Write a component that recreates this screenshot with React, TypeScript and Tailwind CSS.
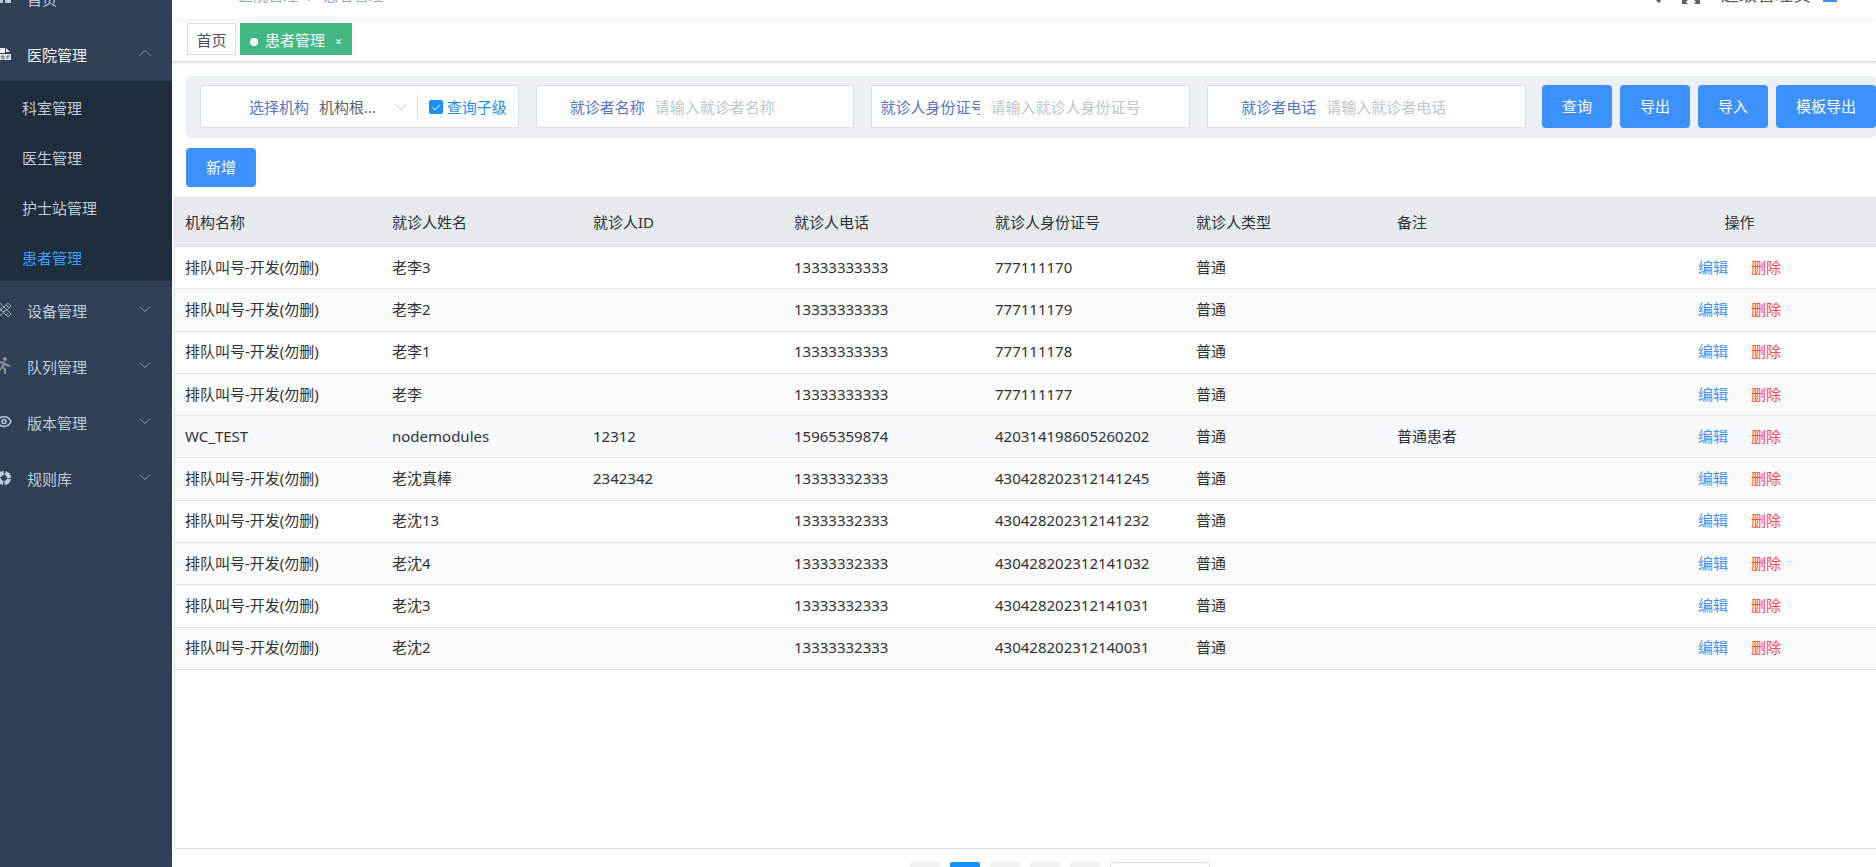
import { useState } from "react";
import type { ReactNode } from "react";

// ── Types ───────────────────────────────────────────────────────────────────

interface MenuItem {
  label: string;
  icon: ReactNode;
  children?: string[];
}

interface Patient {
  org: string;
  name: string;
  pid: string;
  phone: string;
  idCard: string;
  type: string;
  remark: string;
}

// ── Icons ───────────────────────────────────────────────────────────────────

const HomeIcon = (
  <svg viewBox="0 0 20 20" className="h-5 w-5 text-[#bfcbd9]" fill="currentColor">
    <path d="M12 2 4 9v7h7v-3h2v3h6V9z" />
  </svg>
);

const FileIcon = (
  <svg viewBox="0 0 20 20" className="h-5 w-5" fill="none">
    <path d="M5 5h8v5H5zM14 5l4 4h-4z" fill="#f4f4f5" />
    <path d="M3 11h16v6H3z" fill="#e0e4e9" />
    <path d="M6 16v-3h2v1H6m4 2v-3h2v3h-2m5 0v-3h3m-3 1h2" stroke="#6a7686" />
  </svg>
);

const ToolsIcon = (
  <svg viewBox="0 0 20 20" className="h-5 w-5 text-[#9aa5b3]" fill="none" stroke="currentColor">
    <path d="m5 7 3-3 11 11-3 3zM16 4l3 3-10 9-4 2 1-4zM8 10l2-2M11 13l2-2M14 16l2-2M14 6l3 3" />
  </svg>
);

const RunIcon = (
  <svg viewBox="0 0 20 20" className="h-5 w-5 text-[#8c8f94]" fill="none" stroke="currentColor" strokeWidth="2">
    <circle cx="13" cy="4" r="1" fill="currentColor" />
    <path d="m6 10 2-3 4 1 2 2 4 1M12 8l-2 4 3 2v5M9 13l-2 3H4" />
  </svg>
);

const EyeIcon = (
  <svg viewBox="0 0 20 20" className="h-5 w-5 text-[#bfcbd9]" fill="none" stroke="currentColor" strokeWidth="1.5">
    <path d="M5 10.500c3-6.500 11-6.500 14 0-3 6.500-11 6.500-14 0z" />
    <circle cx="12" cy="10.500" r="2" />
  </svg>
);

const RingIcon = (
  <svg viewBox="0 0 20 20" className="h-5 w-5 text-[#bfcbd9]" fill="none" stroke="currentColor" strokeWidth="4">
    <circle cx="12" cy="11" r="5" strokeDasharray="6.4 1.45" strokeDashoffset="-0.7" />
  </svg>
);

function Chevron({ up = false, className = "" }: { up?: boolean; className?: string }) {
  return (
    <svg viewBox="0 0 12 12" className={`h-3 w-3 ${className}`} fill="none" stroke="currentColor">
      <path d={up ? "m.5 8.500 5.500-5 5.500 5" : "m.5 3.500 5.500 5 5.500-5"} />
    </svg>
  );
}

// ── Data ────────────────────────────────────────────────────────────────────

const MENU: MenuItem[] = [
  { label: "首页", icon: HomeIcon },
  {
    label: "医院管理",
    icon: FileIcon,
    children: ["科室管理", "医生管理", "护士站管理", "患者管理"],
  },
  { label: "设备管理", icon: ToolsIcon, children: [] },
  { label: "队列管理", icon: RunIcon, children: [] },
  { label: "版本管理", icon: EyeIcon, children: [] },
  { label: "规则库", icon: RingIcon, children: [] },
];

const ORG = "排队叫号-开发(勿删)";

const PATIENTS: Patient[] = [
  { org: ORG, name: "老李3", pid: "", phone: "13333333333", idCard: "777111170", type: "普通", remark: "" },
  { org: ORG, name: "老李2", pid: "", phone: "13333333333", idCard: "777111179", type: "普通", remark: "" },
  { org: ORG, name: "老李1", pid: "", phone: "13333333333", idCard: "777111178", type: "普通", remark: "" },
  { org: ORG, name: "老李", pid: "", phone: "13333333333", idCard: "777111177", type: "普通", remark: "" },
  { org: "WC_TEST", name: "nodemodules", pid: "12312", phone: "15965359874", idCard: "420314198605260202", type: "普通", remark: "普通患者" },
  { org: ORG, name: "老沈真棒", pid: "2342342", phone: "13333332333", idCard: "430428202312141245", type: "普通", remark: "" },
  { org: ORG, name: "老沈13", pid: "", phone: "13333332333", idCard: "430428202312141232", type: "普通", remark: "" },
  { org: ORG, name: "老沈4", pid: "", phone: "13333332333", idCard: "430428202312141032", type: "普通", remark: "" },
  { org: ORG, name: "老沈3", pid: "", phone: "13333332333", idCard: "430428202312141031", type: "普通", remark: "" },
  { org: ORG, name: "老沈2", pid: "", phone: "13333332333", idCard: "430428202312140031", type: "普通", remark: "" },
];

const COLUMNS = ["机构名称", "就诊人姓名", "就诊人ID", "就诊人电话", "就诊人身份证号", "就诊人类型", "备注"];

const FIELDS = [
  { id: "name", label: "就诊者名称", placeholder: "请输入就诊者名称" },
  { id: "idCard", label: "就诊人身份证号", placeholder: "请输入就诊人身份证号" },
  { id: "phone", label: "就诊者电话", placeholder: "请输入就诊者电话" },
];

// ── Sidebar ─────────────────────────────────────────────────────────────────

function Sidebar({ active }: { active: string }) {
  return (
    <aside className="-ml-7 w-[200px] shrink-0 bg-[#304156] text-[#bfcbd9]">
      {MENU.map((item) => {
        const open = !!item.children?.length;
        return (
          <div key={item.label}>
            <a href="#" className={`flex h-14 items-center px-5 ${open ? "text-[#f4f4f5]" : ""}`}>
              {item.icon}
              <span className="ml-[15px] flex-1 pt-1">{item.label}</span>
              {item.children && <Chevron up={open} className="mr-px text-[#909399]" />}
            </a>
            {open && (
              <div className="bg-[#1f2d3d]">
                {item.children?.map((child) => (
                  <a
                    key={child}
                    href="#"
                    className={`flex h-[50px] items-center pl-[50px] pt-1 ${child === active ? "text-[#409eff]" : ""}`}
                  >
                    {child}
                  </a>
                ))}
              </div>
            )}
          </div>
        );
      })}
    </aside>
  );
}

// ── Top bar and tags ────────────────────────────────────────────────────────

function TopBar() {
  return (
    <header className="flex h-[50px] shrink-0 items-center pl-[66px] pr-[39px] shadow-[0_1px_4px_rgba(0,21,41,0.08)]">
      <nav className="flex flex-1 pt-0.5 text-[#97a8be]" aria-label="面包屑">
        <a href="#">医院管理</a>
        <span className="mx-[10px]">/</span>
        <span>患者管理</span>
      </nav>
      <button type="button" aria-label="搜索" className="mr-5 text-[#5a5e66]">
        <svg viewBox="0 0 20 20" className="h-5 w-5" fill="none" stroke="currentColor" strokeWidth="2">
          <circle cx="9" cy="8" r="6" />
          <path d="m13 12 6 6" strokeWidth="3" />
        </svg>
      </button>
      <button type="button" aria-label="全屏" className="mr-5 text-[#5a5e66]">
        <svg viewBox="0 0 20 20" className="h-5 w-5" fill="currentColor">
          <path d="M1 1h6L5 3l3 3-2 2-3-3-2 2zM19 1v6l-2-2-3 3-2-2 3-3-2-2zM1 20v-6l2 2 3-3 2 2-3 3 2 2zM19 20h-6l2-2-3-3 2-2 3 3 2-2z" />
        </svg>
      </button>
      <span className="text-lg leading-5 text-[#5a5e66]">超级管理员</span>
      <span className="ml-3 h-4 w-[14px] bg-[#3d91ff]" />
    </header>
  );
}

function TagsBar() {
  return (
    <div className="flex h-[43px] shrink-0 items-start gap-1 border-b border-[#d8dce5] pl-[15px] pt-1 shadow-[0_1px_3px_rgba(0,0,0,0.12)]">
      <a href="#" className="flex h-8 w-[49px] items-center justify-center border border-[#d8dce5] pt-0.5 text-[#495060]">
        首页
      </a>
      <a href="#" className="flex h-8 items-center bg-[#42b983] px-[10px] pt-0.5 text-white">
        <span className="mr-[7px] mt-1 h-2 w-2 rounded-full bg-white" />
        患者管理
        <span className="ml-[10px] mt-1 text-xs leading-none">×</span>
      </a>
    </div>
  );
}

// ── Filters ─────────────────────────────────────────────────────────────────

function PrimaryButton({ children, className = "" }: { children: ReactNode; className?: string }) {
  return (
    <button type="button" className={`shrink-0 rounded bg-[#3d91ff] px-5 pb-0.5 text-white ${className}`}>
      {children}
    </button>
  );
}

function FilterBar() {
  const [withChildren, setWithChildren] = useState(true);
  return (
    <form className="ml-[14px] mt-[14px] flex h-[62px] shrink-0 items-start rounded-md bg-[#edf1f6] pl-[14px] pt-[9px]">
      <div className="mr-4 grid flex-1 grid-cols-4 gap-[17px]">
        <div className="flex h-[43px] items-center border border-[#dcdfe6] bg-white">
          <label htmlFor="org" className="w-[108px] shrink-0 text-right text-[#5473c9]">
            选择机构
          </label>
          <div className="relative ml-[10px] flex min-w-0 flex-1 items-center">
            <select id="org" className="w-full appearance-none bg-transparent text-[#606266] outline-none">
              <option>机构根...</option>
            </select>
            <Chevron className="pointer-events-none absolute right-[10px] text-[#c0c4cc]" />
          </div>
          <label className="flex h-6 shrink-0 items-center border-l border-[#dcdfe6] px-[11px] text-[#1890ff]">
            <span className="relative mr-1 flex h-[14px] w-[14px]">
              <input
                type="checkbox"
                checked={withChildren}
                onChange={(e) => setWithChildren(e.target.checked)}
                className="h-[14px] w-[14px] appearance-none rounded-xs border border-[#1890ff] checked:bg-[#1890ff]"
              />
              {withChildren && (
                <svg viewBox="0 0 14 14" className="pointer-events-none absolute inset-0" fill="none" stroke="#fff">
                  <path d="m3.500 7.500 2.500 2.500 5-5.500" />
                </svg>
              )}
            </span>
            查询子级
          </label>
        </div>
        {FIELDS.map((f) => (
          <div key={f.id} className="flex h-[43px] items-center border border-[#dcdfe6] bg-white pl-2">
            <div className="flex w-[100px] shrink-0 justify-end">
              <label htmlFor={f.id} className="min-w-0 overflow-hidden whitespace-nowrap text-[#5473c9]">
                {f.label}
              </label>
            </div>
            <input
              id={f.id}
              placeholder={f.placeholder}
              className="ml-[10px] min-w-0 flex-1 text-[#606266] outline-none placeholder:text-[#c0c4cc]"
            />
          </div>
        ))}
      </div>
      <div className="flex gap-2">
        <PrimaryButton className="h-[43px]">查询</PrimaryButton>
        <PrimaryButton className="h-[43px]">导出</PrimaryButton>
        <PrimaryButton className="h-[43px]">导入</PrimaryButton>
        <PrimaryButton className="h-[43px]">模板导出</PrimaryButton>
      </div>
    </form>
  );
}

// ── Table ───────────────────────────────────────────────────────────────────

function PatientTable() {
  return (
    <div className="ml-[2px] mt-[10px] flex-1 border-b border-l border-t border-[#dcdfe6]">
      <table className="h-[472px] w-full table-fixed border-separate border-spacing-0 text-left text-[#303133]">
        <colgroup>
          <col className="w-[207px]" />
          <col className="w-[201px]" />
          <col className="w-[201px]" />
          <col className="w-[201px]" />
          <col className="w-[201px]" />
          <col className="w-[201px]" />
          <col />
          <col className="w-[273px]" />
        </colgroup>
        <thead>
          <tr className="h-[49px] bg-[#e6eaef]">
            {COLUMNS.map((c) => (
              <th key={c} className="border-b border-[#dfe6ec] px-[10px] font-normal">
                {c}
              </th>
            ))}
            <th className="border-b border-[#dfe6ec] text-center font-normal">操作</th>
          </tr>
        </thead>
        <tbody>
          {PATIENTS.map((p, i) => (
            <tr key={p.name} className={i === 4 ? "bg-[#f7f9fc]" : i % 2 ? "bg-[#fafafa]" : "bg-white"}>
              {[p.org, p.name, p.pid, p.phone, p.idCard, p.type, p.remark].map((v, c) => (
                <td key={c} className="border-b border-[#dfe6ec] px-[10px] pb-0.5">
                  {v}
                </td>
              ))}
              <td className="border-b border-[#dfe6ec] pb-0.5">
                <div className="flex justify-center gap-[23px]">
                  <button type="button" className="text-[#3d91ff]">编辑</button>
                  <button type="button" className="text-[#ff4949]">删除</button>
                </div>
              </td>
            </tr>
          ))}
        </tbody>
      </table>
    </div>
  );
}

function Pagination() {
  return (
    <nav className="flex shrink-0 justify-center gap-[10px] pl-[72px] pt-[13px]" aria-label="分页">
      <button type="button" aria-label="上一页" className="h-[30px] w-[30px] rounded-xs bg-[#f4f4f5]" />
      <button type="button" aria-label="第一页" className="h-[30px] w-[30px] rounded-xs bg-[#1890ff]" />
      <button type="button" aria-label="第二页" className="h-[30px] w-[30px] rounded-xs bg-[#f4f4f5]" />
      <button type="button" aria-label="第三页" className="h-[30px] w-[30px] rounded-xs bg-[#f4f4f5]" />
      <button type="button" aria-label="下一页" className="h-[30px] w-[30px] rounded-xs bg-[#f4f4f5]" />
      <select aria-label="每页条数" className="h-[30px] w-[100px] appearance-none rounded-sm border border-[#dcdfe6]" />
    </nav>
  );
}

// ── Page ────────────────────────────────────────────────────────────────────

export default function App() {
  return (
    <div className="h-screen overflow-hidden bg-white font-['Noto_Sans','Noto_Sans_CJK_SC',sans-serif] text-[15px] leading-5">
      <div className="-mt-[31px] flex h-[calc(100vh+56px)]">
        <Sidebar active="患者管理" />
        <main className="flex min-w-0 flex-1 flex-col">
          <TopBar />
          <TagsBar />
          <FilterBar />
          <div className="ml-[14px] mt-[10px] flex shrink-0">
            <PrimaryButton className="h-[39px]">新增</PrimaryButton>
          </div>
          <PatientTable />
          <Pagination />
        </main>
      </div>
    </div>
  );
}
